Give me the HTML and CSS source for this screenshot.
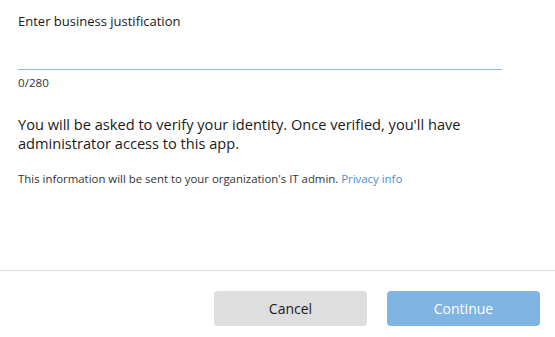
FILE: index.html
```html
<!DOCTYPE html>
<html>
	<head>
		<title>Business justification</title>
<link rel="stylesheet" href="styles.css">
	</head>
	<body>
		<div class="content">
			<label class="label" for="reason">Enter business justification</label>
			<input class="reason" id="reason" autocomplete="off" maxlength="280" />
			<p class="count">0/280</p>
			<p class="note">You will be asked to verify your identity. Once verified, you'll have administrator access to this app.</p>
			<p class="small">This information will be sent to your organization's IT admin. <a href="#" class="link">Privacy info</a></p>
		</div>
		<div class="footer">
			<button class="btn cancel">Cancel</button>
			<button class="btn continue" disabled>Continue</button>
		</div>
	</body>
</html>
```

FILE: styles.css
```css
body {
	margin: 0;
	font-family: "Open Sans", "Noto Sans", sans-serif;
	color: #1a1a1a;
	background-color: #fff;
}

.content {
	padding: 12px 53px 0 18px;
	height: 258px;
}

.label {
	display: block;
	font-size: 13px;
	line-height: 18px;
}

.reason {
	display: block;
	width: 100%;
	box-sizing: border-box;
	margin-top: 20px;
	height: 20px;
	border: none;
	border-bottom: 1px solid #94b8da;
	outline: none;
	padding: 0;
	font: inherit;
}

.count {
	margin: 6px 0 0 0;
	font-size: 11.6px;
	line-height: 14px;
	color: #333;
}

.note {
	margin: 25px 0 0 0;
	font-size: 14.6px;
	line-height: 19px;
}

.small {
	margin: 18px 0 0 0;
	font-size: 11.4px;
	line-height: 16px;
	color: #333;
}

.link {
	color: #4b8fd1;
	text-decoration: none;
}

.footer {
	border-top: 1px solid #dcdce0;
	display: flex;
	justify-content: flex-end;
	gap: 20px;
	padding: 20px 15px 0 0;
}

.btn {
	width: 153px;
	height: 35px;
	border: none;
	border-radius: 4px;
	font-family: inherit;
	font-size: 14px;
}

.cancel {
	background: #dedede;
	color: #1a1a1a;
}

.continue {
	background: #80b5e3;
	color: #fff;
}
```
